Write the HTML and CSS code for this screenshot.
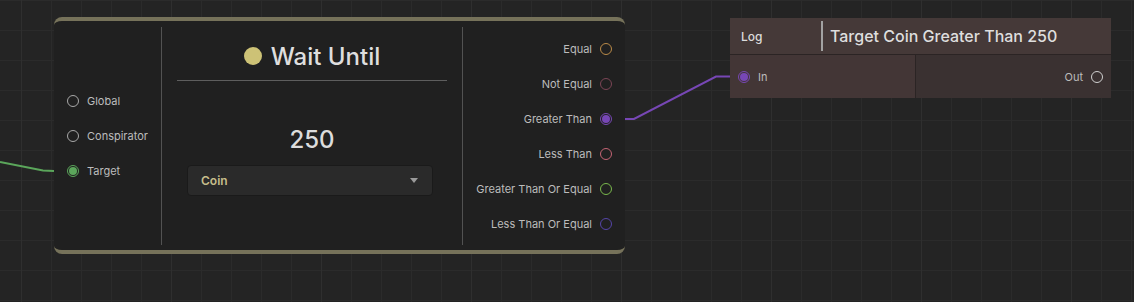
FILE: index.html
```html
<!DOCTYPE html>
<html lang="en">
   <head>
       <meta charset="UTF-8">
       <meta name="viewport" content="width=device-width, initial-scale=1.0">
       <title>Wait Until Graph</title>
       <link rel="stylesheet" href="styles.css">
   </head>
   <body>
       <div class="graph">
           <svg class="wires" width="1134" height="302" viewBox="0 0 1134 302">
               <polyline points="0,162 43,170.5 54,171" class="wire wire-green"/>
               <polyline points="625,119 634,119 716,76.5 738,76.5" class="wire wire-purple"/>
           </svg>

           <div class="node wait-node">
               <div class="col inputs">
                   <div class="port"><span class="dot"></span><span>Global</span></div>
                   <div class="port"><span class="dot"></span><span>Conspirator</span></div>
                   <div class="port"><span class="dot filled green"></span><span>Target</span></div>
               </div>

               <div class="col center">
                   <div class="title"><span class="title-dot"></span>Wait Until</div>
                   <div class="rule"></div>
                   <div class="value">250</div>
                   <div class="dropdown">
                       <span>Coin</span>
                       <span class="arrow"></span>
                   </div>
               </div>

               <div class="col outputs">
                   <div class="port"><span>Equal</span><span class="dot orange"></span></div>
                   <div class="port"><span>Not Equal</span><span class="dot mauve"></span></div>
                   <div class="port"><span>Greater Than</span><span class="dot filled purple"></span></div>
                   <div class="port"><span>Less Than</span><span class="dot pink"></span></div>
                   <div class="port"><span>Greater Than Or Equal</span><span class="dot lime"></span></div>
                   <div class="port"><span>Less Than Or Equal</span><span class="dot indigo"></span></div>
               </div>
           </div>

           <div class="node log-node">
               <div class="log-header">
                   <span class="log-label">Log</span>
                   <span class="log-field">Target Coin Greater Than 250</span>
               </div>
               <div class="log-body">
                   <div class="log-in port"><span class="dot filled purple"></span><span>In</span></div>
                   <div class="log-out port"><span>Out</span><span class="dot light"></span></div>
               </div>
           </div>
       </div>
   </body>
</html>
```

FILE: styles.css
```css
html, body {
    margin: 0;
    padding: 0;
    width: 1134px;
    height: 302px;
    overflow: hidden;
}
body {
    font-family: Inter, "Noto Sans", sans-serif;
    background-color: #242424;
}
.graph {
    position: relative;
    width: 1134px;
    height: 302px;
    background-image:
        linear-gradient(to right, #2f2f2f 1px, transparent 1px),
        linear-gradient(to right, #2b2b2b 1px, transparent 1px),
        linear-gradient(to bottom, #2b2b2b 1px, transparent 1px);
    background-size: 150px 150px, 30px 30px, 30px 30px;
    background-position: 21px 0, 21px 0, 21px 0;
}
.wires {
    position: absolute;
    left: 0;
    top: 0;
}
.wire {
    fill: none;
    stroke-width: 2;
}
.wire-green {
    stroke: #5ba65b;
}
.wire-purple {
    stroke: #7747b5;
}

/* nodes sit on a free canvas */
.node {
    position: absolute;
    box-sizing: border-box;
}
.wait-node {
    left: 54px;
    top: 17px;
    width: 571px;
    height: 237px;
    background-color: #202020;
    border-top: 4px solid #76725a;
    border-bottom: 4px solid #76725a;
    border-radius: 8px;
    padding: 6px 0 5px;
    display: flex;
}
.col {
    display: flex;
    flex-direction: column;
}
.inputs {
    width: 108px;
    justify-content: center;
    gap: 23px;
    padding-left: 13px;
    box-sizing: border-box;
    border-right: 1px solid #525252;
}
.center {
    width: 300px;
    align-items: center;
    border-right: 1px solid #525252;
}
.outputs {
    flex: 1;
    justify-content: center;
    align-items: flex-end;
    gap: 23px;
    padding-right: 13px;
    padding-top: 1px;
}
.port {
    display: flex;
    align-items: center;
    gap: 8px;
    height: 12px;
    font-size: 11px;
    color: #bcbcbc;
}
.dot {
    box-sizing: border-box;
    width: 12px;
    height: 12px;
    border-radius: 50%;
    border: 1.5px solid #a8a8a8;
    padding: 1.5px;
    background-clip: content-box;
    flex-shrink: 0;
}
.dot.green { border-color: #5ba65b; background-color: #5ba65b; }
.dot.orange { border-color: #b98a48; }
.dot.mauve { border-color: #7b4555; }
.dot.purple { border-color: #7747b5; background-color: #7747b5; }
.dot.pink { border-color: #c46474; }
.dot.lime { border-color: #79b84c; }
.dot.indigo { border-color: #5545a8; }
.dot.light { border-color: #d0d0d0; }
.dot.filled { padding: 1px; }

.title {
    display: flex;
    align-items: center;
    gap: 9px;
    margin-top: 14px;
    height: 30px;
    font-size: 24px;
    font-weight: 500;
    color: #dedede;
}
.title-dot {
    width: 18px;
    height: 18px;
    border-radius: 50%;
    background-color: #cdc276;
}
.rule {
    align-self: stretch;
    margin: 9px 15px 0;
    height: 1px;
    background-color: #5e5e5e;
}
.value {
    margin-top: 44px;
    height: 30px;
    line-height: 30px;
    font-size: 24px;
    font-weight: 500;
    color: #dcdcdc;
}
.dropdown {
    align-self: stretch;
    margin: 10px 29px 0 25px;
    height: 31px;
    box-sizing: border-box;
    padding: 0 14px 0 13px;
    display: flex;
    align-items: center;
    justify-content: space-between;
    background-color: #2a2a2a;
    border: 1px solid #1a1a1a;
    border-radius: 4px;
    font-size: 12px;
    font-weight: 600;
    color: #c6bd8b;
}
.arrow {
    width: 0;
    height: 0;
    border-left: 4px solid transparent;
    border-right: 4px solid transparent;
    border-top: 5px solid #9a9a9a;
}

.log-node {
    left: 730px;
    top: 18px;
    width: 381px;
    height: 80px;
    display: flex;
    flex-direction: column;
}
.log-header {
    height: 36px;
    display: flex;
    align-items: center;
    background-color: #453938;
    border-bottom: 1px solid #2b2424;
}
.log-label {
    width: 91px;
    box-sizing: border-box;
    padding-left: 11px;
    font-size: 12px;
    font-weight: 500;
    color: #dcdcdc;
}
.log-field {
    height: 30px;
    line-height: 30px;
    border-left: 2px solid #a2a2a2;
    padding-left: 7px;
    font-size: 16px;
    font-weight: 500;
    color: #dedede;
}
.log-body {
    flex: 1;
    display: flex;
}
.log-in {
    width: 186px;
    box-sizing: border-box;
    height: auto;
    padding-left: 8px;
    background-color: #433636;
    border-right: 1px solid #2b2424;
}
.log-out {
    flex: 1;
    height: auto;
    justify-content: flex-end;
    padding-right: 8px;
    background-color: #3a3131;
}
```
